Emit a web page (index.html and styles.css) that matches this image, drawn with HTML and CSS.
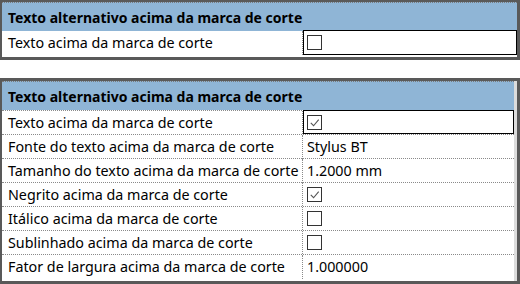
FILE: index.html
```html
<!DOCTYPE html>
<html>
<head>
<meta charset="utf-8">
<link rel="stylesheet" href="styles.css">
</head>
<body>
<div class="panel p1">
  <div class="inner">
    <div class="head">Texto alternativo acima da marca de corte</div>
    <div class="row">
      <div class="name">Texto acima da marca de corte</div>
      <div class="val edit"><span class="cb"></span></div>
    </div>
  </div>
</div>

<div class="panel p2">
  <div class="inner">
    <div class="head">Texto alternativo acima da marca de corte</div>
    <div class="row">
      <div class="name">Texto acima da marca de corte</div>
      <div class="val edit"><span class="cb"><svg viewBox="0 0 14 14"><polyline points="3,7.5 6,10.5 11.5,4" /></svg></span></div>
    </div>
    <div class="row">
      <div class="name">Fonte do texto acima da marca de corte</div>
      <div class="val">Stylus BT</div>
    </div>
    <div class="row">
      <div class="name">Tamanho do texto acima da marca de corte</div>
      <div class="val">1.2000 mm</div>
    </div>
    <div class="row">
      <div class="name">Negrito acima da marca de corte</div>
      <div class="val"><span class="cb"><svg viewBox="0 0 14 14"><polyline points="3,7.5 6,10.5 11.5,4" /></svg></span></div>
    </div>
    <div class="row">
      <div class="name">Itálico acima da marca de corte</div>
      <div class="val"><span class="cb"></span></div>
    </div>
    <div class="row">
      <div class="name">Sublinhado acima da marca de corte</div>
      <div class="val"><span class="cb"></span></div>
    </div>
    <div class="row">
      <div class="name">Fator de largura acima da marca de corte</div>
      <div class="val">1.000000</div>
    </div>
  </div>
</div>
</body>
</html>
```

FILE: styles.css
```css
html, body {
  margin: 0;
  padding: 0;
  background: #ffffff;
}
body {
  width: 520px;
  height: 284px;
  overflow: hidden;
  font-family: "Noto Sans", "Open Sans", sans-serif;
  font-size: 14.3px;
  color: #000;
}
.panel {
  box-sizing: border-box;
  width: 520px;
  border-style: solid;
  border-color: #595959;
  border-width: 2px 3px 3px 2px;
  background: #fff;
}
.p1 {
  height: 60px;
}
.p2 {
  margin-top: 18px;
  height: 206px;
  border-top-width: 3px;
  background: #dcdcdc;
}
.p2 .inner {
  margin-right: 3px;
  background: #fff;
  height: 100%;
}
.head {
  box-sizing: border-box;
  height: 29px;
  border-top: 1px dotted #7a7a7a;
  background: #8fb5d6;
  font-weight: bold;
  font-size: 14px;
  line-height: 29px;
  padding-left: 6px;
}
.row {
  display: grid;
  grid-template-columns: 301px 1fr;
  height: 24px;
  box-sizing: border-box;
  border-top: 1px dotted #8a8a8a;
}
.p1 .row {
  border-top: none;
  height: 24px;
}
.name {
  padding-left: 6px;
  line-height: 24px;
  white-space: nowrap;
  overflow: hidden;
  border-right: 1px dotted #8a8a8a;
}
.val {
  padding-left: 4px;
  line-height: 24px;
  display: flex;
  align-items: center;
}
.edit {
  border: 1px solid #000;
  margin-top: -1px;
  padding-left: 3px;
}
.cb {
  box-sizing: border-box;
  width: 15px;
  height: 15px;
  border: 1px solid #333;
  background: #fff;
  display: inline-block;
}
.cb svg {
  display: block;
  width: 13px;
  height: 13px;
  fill: none;
  stroke: #555;
  stroke-width: 1.2;
}
```
